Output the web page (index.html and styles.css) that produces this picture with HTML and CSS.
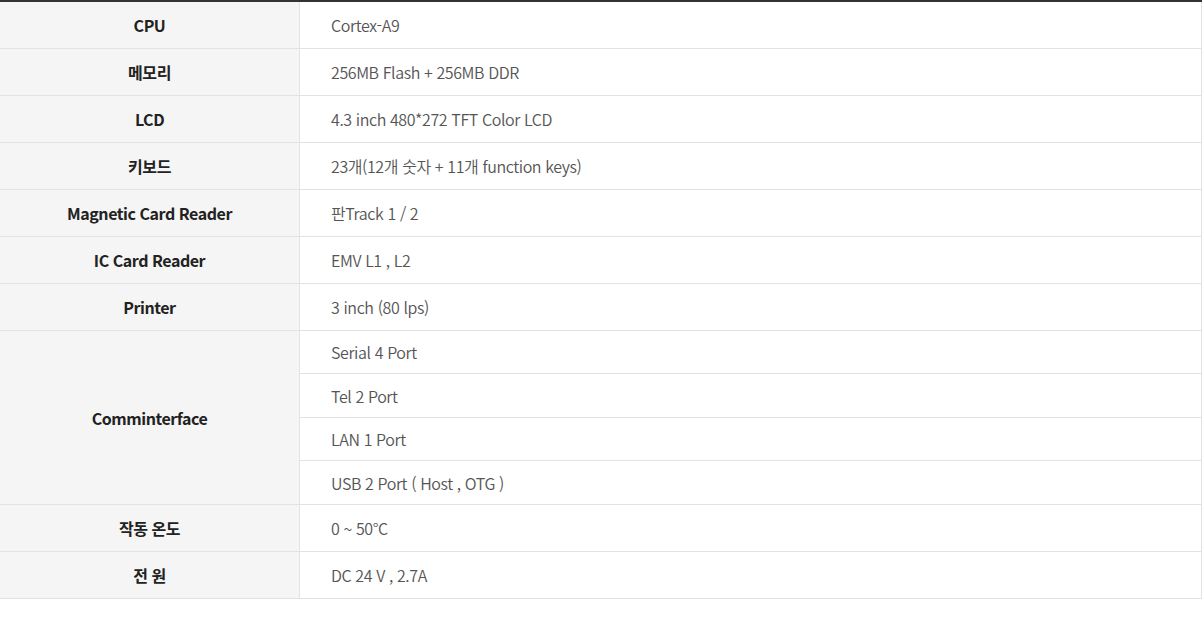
FILE: index.html
```html
<!DOCTYPE html>
<html lang="ko">
<head>
<meta charset="utf-8">
<link rel="stylesheet" href="styles.css">
</head>
<body>
<table class="spec">
  <tbody>
    <tr class="row"><th>CPU</th><td>Cortex-A9</td></tr>
    <tr class="row"><th>메모리</th><td>256MB Flash + 256MB DDR</td></tr>
    <tr class="row"><th>LCD</th><td>4.3 inch 480*272 TFT Color LCD</td></tr>
    <tr class="row"><th>키보드</th><td>23개(12개 숫자 + 11개 function keys)</td></tr>
    <tr class="row"><th>Magnetic Card Reader</th><td>판Track 1 / 2</td></tr>
    <tr class="row"><th>IC Card Reader</th><td>EMV L1 , L2</td></tr>
    <tr class="row"><th>Printer</th><td>3 inch (80 lps)</td></tr>
    <tr class="sub a"><th rowspan="4">Comminterface</th><td>Serial 4 Port</td></tr>
    <tr class="sub b"><td>Tel 2 Port</td></tr>
    <tr class="sub a"><td>LAN 1 Port</td></tr>
    <tr class="sub b"><td>USB 2 Port ( Host , OTG )</td></tr>
    <tr class="row"><th>작동 온도</th><td>0 ~ 50°C</td></tr>
    <tr class="row"><th>전 원</th><td>DC 24 V , 2.7A</td></tr>
  </tbody>
</table>
</body>
</html>
```

FILE: styles.css
```css
html, body {
  margin: 0;
  padding: 0;
  background: #fff;
}
body {
  font-family: "Noto Sans CJK KR", "Noto Sans", sans-serif;
  font-size: 16px;
}
.spec {
  width: 1202px;
  border-collapse: collapse;
  border-top: 2px solid #333;
  table-layout: fixed;
}
.spec th,
.spec td {
  padding: 0;
  border-bottom: 1px solid #e2e2e2;
  line-height: 20px;
}
.spec th {
  width: 299px;
  background: #f5f5f5;
  color: #222;
  font-weight: 700;
  letter-spacing: -0.45px;
  text-align: center;
  border-right: 1px solid #e2e2e2;
}
.spec td {
  color: #555;
  font-weight: 350;
  letter-spacing: -0.4px;
  text-align: left;
  padding-left: 31px;
  border-right: 1px solid #e2e2e2;
}
.spec .row td,
.spec .row th {
  height: 46px;
}
.spec .sub.a td {
  height: 42px;
}
.spec .sub.b td {
  height: 43px;
}
```
